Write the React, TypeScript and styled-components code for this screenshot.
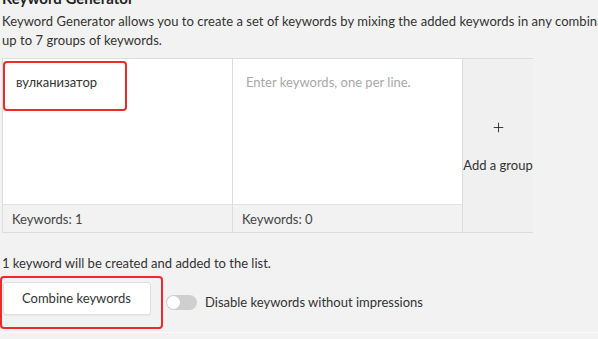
import React from 'react';
import styled, { createGlobalStyle } from 'styled-components';
import { Plus } from 'lucide-react';

const GlobalStyle = createGlobalStyle`
  html, body {
    margin: 0;
    padding: 0;
    background: #f2f2f2;
    overflow: hidden;
  }

  body {
    font-family: Lato, 'Noto Sans', 'Liberation Sans', sans-serif;
    color: #333;
  }
`;

const Page = styled.div`
  width: 598px;
  height: 333px;
  padding-left: 2px;
  box-sizing: border-box;
  display: flex;
  flex-direction: column;
  border-bottom: 1px solid #fbfbfb;
  overflow: hidden;
`;

const Title = styled.div`
  margin-top: -12px;
  font-size: 15px;
  font-weight: 700;
  line-height: 20px;
  color: #222;
  white-space: nowrap;
`;

const Description = styled.div`
  margin-top: 4px;
  font-size: 13px;
  line-height: 19px;
  letter-spacing: 0.05px;
  white-space: nowrap;
`;

const Groups = styled.div`
  margin-top: 8px;
  display: grid;
  grid-template-columns: 230px 230px 70px;
  height: 175px;
  width: 531px;
  border: 1px solid #dcdcdc;
  box-sizing: border-box;
`;

const Group = styled.div`
  position: relative;
  display: flex;
  flex-direction: column;
  border-right: 1px solid #dcdcdc;
  background: #fff;
`;

const Words = styled.div<{ $empty?: boolean }>`
  flex: 1;
  padding: 15px 13px;
  font-size: 13px;
  line-height: 17px;
  color: ${({ $empty }) => ($empty ? '#a8a8a8' : '#333')};
`;

const Counter = styled.div`
  height: 27px;
  display: flex;
  align-items: center;
  padding-left: 9px;
  border-top: 1px solid #e3e3e3;
  background: #f2f2f2;
  font-size: 13px;
  color: #444;
`;

const Highlight = styled.div`
  position: absolute;
  left: 0;
  top: 2px;
  width: 124px;
  height: 50px;
  border: 2.5px solid #ec2a2a;
  border-radius: 4px;
  box-sizing: border-box;
  pointer-events: none;
`;

const AddGroup = styled.div`
  display: flex;
  flex-direction: column;
  align-items: center;
  justify-content: center;
  gap: 22px;
  padding-top: 2px;
  background: #f0f0f0;
  font-size: 13px;
  color: #333;
  white-space: nowrap;
`;

const Note = styled.div`
  margin-top: 21px;
  font-size: 13px;
  line-height: 18px;
`;

const Actions = styled.div`
  margin-top: 4px;
  display: flex;
  align-items: center;
  gap: 3px;
`;

const Frame = styled.div`
  margin-left: -2px;
  width: 163px;
  height: 53px;
  padding: 6px 0 0 3px;
  box-sizing: border-box;
  border: 2.5px solid #ec2a2a;
  border-radius: 4px;
`;

const Button = styled.button`
  display: block;
  width: 148px;
  height: 33px;
  margin: -2.5px 0 0 -2.5px;
  border: 1px solid #e0e0e0;
  border-radius: 3px;
  background: #fff;
  font-family: inherit;
  font-size: 13px;
  color: #333;
  box-shadow: 0 1px 1px rgba(0, 0, 0, 0.04);
`;

const Toggle = styled.div`
  position: relative;
  width: 31px;
  height: 15px;
  border-radius: 8px;
  background: #cfcfcf;

  &::after {
    content: '';
    position: absolute;
    left: 1px;
    top: 1px;
    width: 13px;
    height: 13px;
    border-radius: 50%;
    background: #fff;
  }
`;

const ToggleLabel = styled.label`
  display: flex;
  align-items: center;
  gap: 8px;
  font-size: 13px;
  color: #333;
  line-height: 15px;
`;

const App: React.FC = () => {
  return (
    <>
      <GlobalStyle />
      <Page>
        <Title>Keyword Generator</Title>
        <Description>
          Keyword Generator allows you to create a set of keywords by mixing the added keywords in any combination. You can add
          <br />
          up to 7 groups of keywords.
        </Description>
        <Groups>
          <Group>
            <Words>вулканизатор</Words>
            <Counter>Keywords: 1</Counter>
            <Highlight />
          </Group>
          <Group>
            <Words $empty>Enter keywords, one per line.</Words>
            <Counter>Keywords: 0</Counter>
          </Group>
          <AddGroup>
            <Plus size={15} strokeWidth={1.4} color='#222' />
            <span>Add a group</span>
          </AddGroup>
        </Groups>
        <Note>1 keyword will be created and added to the list.</Note>
        <Actions>
          <Frame>
            <Button>Combine keywords</Button>
          </Frame>
          <ToggleLabel>
            <Toggle />
            <span>Disable keywords without impressions</span>
          </ToggleLabel>
        </Actions>
      </Page>
    </>
  );
};

export default App;
